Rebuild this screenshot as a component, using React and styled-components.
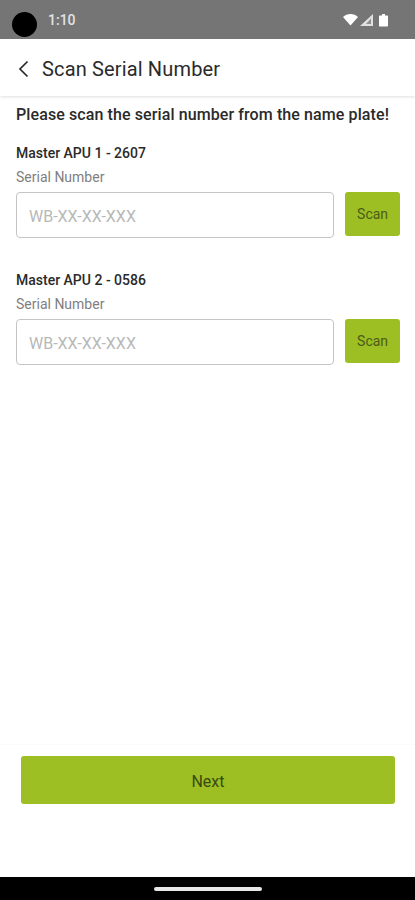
import React from "react";
import styled, { createGlobalStyle } from "styled-components";

const GlobalStyle = createGlobalStyle`
    html, body {
        margin: 0;
        padding: 0;
        background: #fff;
        font-family: Roboto, "Liberation Sans", sans-serif;
    }
`;

const Screen = styled.div`
    width: 415px;
    height: 900px;
    display: flex;
    flex-direction: column;
    overflow: hidden;
    background: #fff;
`;

const StatusBar = styled.div`
    position: relative;
    height: 39px;
    flex-shrink: 0;
    display: flex;
    align-items: center;
    justify-content: space-between;
    padding: 1px 27px 0 48px;
    box-sizing: border-box;
    background: #757575;
`;

const Camera = styled.div`
    position: absolute;
    left: 12px;
    top: 12px;
    width: 25px;
    height: 25px;
    border-radius: 50%;
    background: #000;
`;

const Time = styled.span`
    font-size: 14px;
    font-weight: 500;
    color: #e2e2e2;
`;

const StatusIcons = styled.svg`
    width: 48px;
    height: 14px;
    display: block;
`;

const Header = styled.div`
    height: 57px;
    flex-shrink: 0;
    display: flex;
    align-items: center;
    gap: 13px;
    padding: 2px 0 0 18px;
    box-sizing: border-box;
    background: #fff;
    box-shadow: 0 1px 3px rgba(0, 0, 0, 0.13);
`;

const BackIcon = styled.svg`
    width: 11px;
    height: 18px;
    display: block;
`;

const Title = styled.h1`
    margin: 0;
    font-size: 20px;
    font-weight: 400;
    letter-spacing: 0.15px;
    color: #2a2a2a;
`;

const Content = styled.div`
    flex: 1;
    display: flex;
    flex-direction: column;
    padding: 9px 15px 0 16px;
`;

const Prompt = styled.p`
    margin: 0 0 19px;
    height: 20px;
    line-height: 20px;
    font-size: 16px;
    font-weight: 500;
    letter-spacing: 0.1px;
    white-space: nowrap;
    color: #2a2a2a;
`;

const Unit = styled.section`
    margin-bottom: 33px;
`;

const UnitName = styled.div`
    height: 18px;
    line-height: 18px;
    font-size: 14px;
    font-weight: 500;
    color: #2a2a2a;
`;

const FieldLabel = styled.div`
    margin-top: 7px;
    height: 17px;
    line-height: 17px;
    font-size: 14px;
    color: #808080;
`;

const FieldRow = styled.div`
    margin-top: 6px;
    display: flex;
    align-items: flex-start;
    gap: 11px;
`;

const SerialInput = styled.input`
    width: 319px;
    height: 46px;
    box-sizing: border-box;
    padding: 2px 12px 0;
    border: 1.5px solid #c4c4c4;
    border-radius: 4px;
    background: #fff;
    outline: none;
    font-family: inherit;
    font-size: 16px;
    color: #222;

    &::placeholder {
        color: #b8b8b8;
        opacity: 1;
    }
`;

const ActionButton = styled.button`
    border: none;
    border-radius: 3px;
    padding: 0;
    background: #9dbf24;
    font-family: inherit;
    color: #4a5c16;
    cursor: pointer;
`;

const ScanButton = styled(ActionButton)`
    width: 55px;
    height: 44px;
    font-size: 14px;
`;

const Footer = styled.div`
    flex-shrink: 0;
    padding: 11px 20px 73px 21px;
    border-top: 1px solid #fbfbfb;
`;

const NextButton = styled(ActionButton)`
    display: block;
    width: 100%;
    height: 48px;
    padding-top: 2px;
    font-size: 16px;
    color: #3a4a10;
`;

const NavBar = styled.div`
    height: 23px;
    flex-shrink: 0;
    display: flex;
    justify-content: center;
    align-items: center;
    background: #000;
`;

const HomeIndicator = styled.div`
    width: 108px;
    height: 4px;
    border-radius: 2px;
    background: #e8e8e8;
`;

const units = ["Master APU 1 - 2607", "Master APU 2 - 0586"];

const App = () => {
    return (
        <Screen>
            <GlobalStyle />
            <StatusBar>
                <Camera />
                <Time>1:10</Time>
                <StatusIcons viewBox="0 0 48 14">
                    <path d="M3 4C5 2.3 7.6 1 10.5 1S16 2.3 18 4L10.5 12.5Z" fill="#fff" />
                    <path d="M33 1V13H20Z" fill="#e0e0e0" />
                    <path d="M31 5.5V11H26Z" fill="#8f8f8f" />
                    <path d="M39 3.5C39 2.9 39.4 2.5 40 2.5H42V1H45V2.5H47C47.6 2.5 48 2.9 48 3.5V12.5C48 13.1 47.6 13.5 47 13.5H40C39.4 13.5 39 13.1 39 12.5Z" fill="#fff" />
                </StatusIcons>
            </StatusBar>
            <Header>
                <BackIcon viewBox="0 0 11 18">
                    <path d="M9.5 1.5 2 9l7.5 7.5" fill="none" stroke="#2a2a2a" strokeWidth="1.7" />
                </BackIcon>
                <Title>Scan Serial Number</Title>
            </Header>
            <Content>
                <Prompt>Please scan the serial number from the name plate!</Prompt>
                {units.map((name) => (
                    <Unit key={name}>
                        <UnitName>{name}</UnitName>
                        <FieldLabel>Serial Number</FieldLabel>
                        <FieldRow>
                            <SerialInput placeholder="WB-XX-XX-XXX" readOnly />
                            <ScanButton>Scan</ScanButton>
                        </FieldRow>
                    </Unit>
                ))}
            </Content>
            <Footer>
                <NextButton>Next</NextButton>
            </Footer>
            <NavBar>
                <HomeIndicator />
            </NavBar>
        </Screen>
    );
};

export default App;
